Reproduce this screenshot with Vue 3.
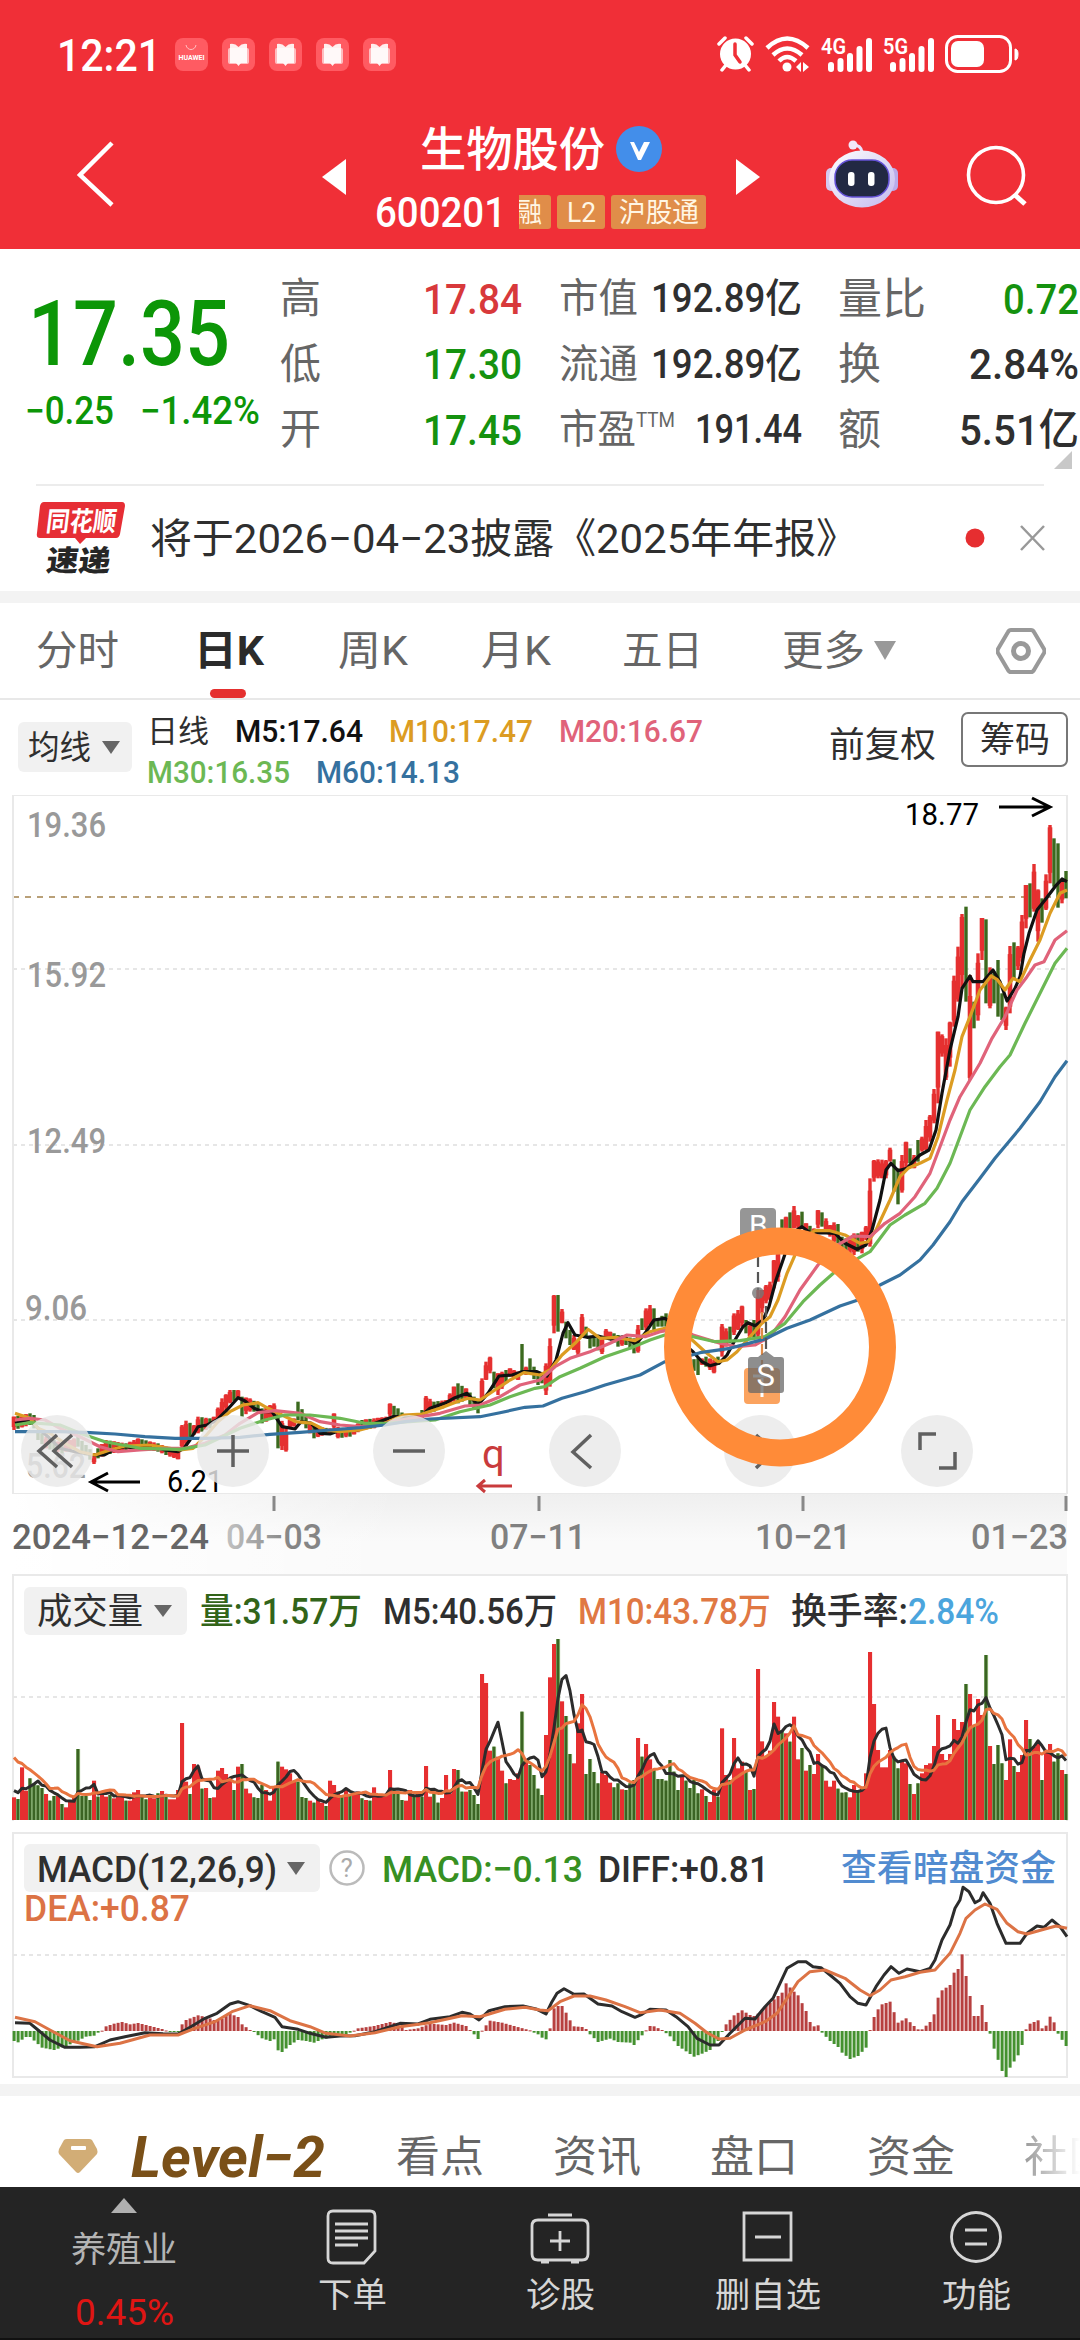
<script setup>
import { h } from 'vue'

// Text set to an exact width, so that columns line up whatever the font metrics are
const T = (props) =>
  h('svg', { width: props.w, height: props.s, class: 't', style: 'display:block;overflow:visible;flex:none' }, [
    h('text', {
      x: 0,
      y: props.s * 0.86,
      textLength: props.w,
      lengthAdjust: 'spacingAndGlyphs',
      'font-size': props.s,
      'font-weight': props.b || 400,
      'font-style': props.i ? 'italic' : 'normal',
      fill: props.c || 'currentColor'
    }, props.v)
  ])
T.props = ['v', 'w', 's', 'c', 'b', 'i']

const X = (i) => 14 + 4 * i
const N = 264

// r = rising day, g = falling day; number is the distance of the bar top from the panel top
const volRaw = `712r 717g 622r 692r 655g 672g 676g 684g 702r 722g 708g 708r 732g 742r 725r 712r 567g 708g 708g 720g 662r 710g 700r 710r 705g 715r 702r 708r 722g 722r 697r 690r 710g 718g 712r 715r 700g 693r 710g 718r 718r 690r 489r 665r 702g 612r 620r 686g 684r 714g 712r 632r 624r 642r 660r 690g 620r 612g 686r 700r 712g 714g 675g 690r 722r 680r 605g 620r 628r 640r 665r 665g 711g 714g 722r 728g 720r 728r 738g 662r 675r 695r 705g 690r 705g 700r 695r 715g 720r 722g 682r 705r 710r 705r 630r 690g 700g 720g 722r 690r 705g 700r 710g 618r 710r 700g 728g 714r 645r 700r 627r 630g 695g 695r 690g 705g 732g 342r 369r 572r 560g 590r 632r 670g 657r 660r 640r 455g 600r 615g 645g 686g
705g 525r 352r 252r 237g 424r 468g 582g 610r 490r 402r 642g 597g 636g 670g 636r 645r 668r 682g 670g 688r 690g 670g 660g 534r 590g 552r 598r 628g 657g 657g 662g 600g 635g 690g 650r 662g 684g 660g 700g 688r 708g 726r 690r 710g 505r 645r 660g 534r 625r 605r 635g 690r 687g 327r 544r 590r 572r 426r 470r 510g 520r 545g 470r 598r 564g 632r 615g 642r 582r 615g 662r 680r 662r 686g 698g 697g 712r 675r 690g 680r 640r 276r 432r 570r 622r 622r 570r 590g 625g 605r 610r 672g 702r 670g 640r 615r 610r 558r 465r 582r 600r 582r 477r 510r 486r 372g 402r 495g 417r 465r 285g 558r 612g 555g 610g 660r 538r 618g 636r 585r 480r 537g 560r 550r 660g 570r 552r 605g 580g 630r 642g`
const vols = volRaw.trim().split(/\s+/).map((s, i) => ({
  x: X(i), y: 1560 + parseInt(s) / 3, up: s.endsWith('r')
}))
const average = (n, seed) =>
  vols.map((v, i) => {
    let sum = 0
    for (let k = 0; k < n; k++) sum += i - k >= 0 ? vols[i - k].y : seed
    return `${v.x},${(sum / n).toFixed(1)}`
  }).join(' ')
const vol5 = average(5, 1789)
const vol10 = average(10, 1753)

const parse = (s) => s.trim().split(/\s+/).map((p) => p.split(',').map(Number))
const spread = (keys) => {
  const out = []
  let k = 0
  for (let i = 0; i < N; i++) {
    while (k < keys.length - 2 && keys[k + 1][0] <= i) k++
    const a = keys[k], b = keys[k + 1]
    const t = Math.min(1, Math.max(0, (i - a[0]) / (b[0] - a[0])))
    out.push(a.slice(1).map((v, j) => v + (b[j + 1] - v) * t))
  }
  return out
}

// day index, high, low
const range = parse(`0,950,990 4,940,975 5,945,985 6,990,1020 8,1010,1045 12,1030,1060 16,1010,1040 20,1060,1092 21,1045,1075 23,1020,1065 28,1030,1050 31,1015,1045 36,1030,1055 39,1045,1070 41,1045,1078 42,975,1050 43,962,1035 45,975,1005 46,950,1000 49,955,985 50,950,970 52,895,950 54,870,910 56,870,895 57,890,950 59,895,935 61,910,935 62,925,970 65,910,955 66,940,1045 68,985,1055 69,960,985 70,955,980 71,905,960 73,950,985 75,980,1015 79,985,1000 80,940,990 81,980,1015 84,990,1010 87,960,990 90,955,985 93,950,970 94,910,950 96,925,950 98,950,965 101,945,960 102,930,955 103,888,940 105,905,935 108,900,920 110,860,905 111,850,910 113,865,900 115,890,930 116,900,940 117,835,900 118,785,840 119,770,820 120,815,865 121,820,885 124,805,830 126,815,840 127,732,820 128,800,825 129,775,820 131,825,855 132,820,850 133,790,885 134,715,860 135,585,700 136,585,695 137,627,670 138,665,715 139,690,735 140,705,750 141,720,765 142,642,710 143,680,710 144,710,745 145,710,740 147,712,762 148,687,715 149,695,715 151,705,740 153,710,735 155,715,760 156,675,758 157,655,690 158,625,690 159,615,675 160,625,690 161,655,680 163,640,680 166,700,760 169,780,800 171,775,825 172,775,795 173,770,800 175,780,820 176,770,795 177,672,770 178,685,740 179,680,730 180,640,705 181,630,690 182,617,680 183,660,700 184,670,710 185,660,712 186,570,715 187,570,640 188,555,610 189,545,600 190,480,565 191,430,545 192,358,440 193,350,400 194,337,385 195,318,385 196,345,385 197,335,385 198,370,400 200,385,400 201,330,385 202,337,380 203,355,400 204,375,410 205,367,430 206,372,430 207,410,450 209,420,460 210,400,465 211,400,455 212,395,460 213,378,420 214,235,440 215,180,245 216,178,235 218,180,235 219,143,185 220,178,275 221,205,313 222,165,278 223,125,205 224,145,190 225,165,205 226,120,185 227,110,155 228,60,150 229,45,125 230,-33,70 231,-205,10 232,-197,-130 233,-185,-60 234,-235,-100 235,-373,-220 236,-460,-295 237,-558,-335 238,-580,-295 239,-375,-60 240,-295,-215 241,-440,-238 242,-546,-420 243,-542,-290 244,-398,-275 245,-385,-290 246,-420,-250 247,-320,-240 248,-280,-210 249,-462,-260 250,-473,-360 251,-462,-390 252,-555,-415 253,-645,-515 254,-650,-548 255,-708,-565 256,-632,-475 257,-605,-532 258,-677,-570 259,-825,-650 260,-785,-640 261,-770,-577 262,-660,-590 263,-687,-605`)
const candles = spread(range).map(([hi, lo], i) => {
  const j = ((i * 37) % 11) / 11
  const d = (lo - hi) * 0.22
  return {
    x: X(i), up: vols[i].up,
    y1: 1100 + hi / 3, y2: 1100 + lo / 3,
    b1: 1100 + (hi + d * j) / 3, b2: 1100 + (lo - d * (1 - j)) / 3
  }
})

const line = (s, top) => parse(s).map(([x, y]) => `${x},${(top + y / 3).toFixed(1)}`).join(' ')
const averages = [
  { c: '#111', p: line('15,970 30,958 38,985 48,1010 60,1045 75,1055 95,1065 104,1065 116,1045 125,1040 139,1045 150,1035 165,1050 178,1055 184,1045 190,1020 198,980 207,975 217,960 227,930 238,893 245,903 254,925 263,935 272,935 282,980 295,987 301,965 311,970 320,1000 330,1002 341,990 357,990 375,970 393,950 404,950 420,950 430,925 446,908 455,893 467,880 478,915 488,880 499,828 512,825 522,815 537,815 547,828 556,780 563,700 568,668 575,705 587,712 598,708 611,718 623,710 636,732 645,700 654,660 665,655 672,670 685,735 693,755 702,785 710,797 719,790 727,765 735,720 743,680 748,668 755,677 763,660 769,620 776,540 783,480 792,400 802,380 811,400 822,398 835,400 845,430 857,448 866,435 872,390 880,300 886,210 891,190 898,212 907,205 913,185 920,165 929,150 936,90 942,-20 950,-150 958,-250 962,-335 970,-372 973,-355 983,-355 993,-390 1000,-355 1007,-297 1015,-335 1020,-370 1024,-440 1029,-500 1037,-570 1045,-600 1055,-640 1062,-663 1067,-655', 1100) },
  { c: '#dc9c22', p: line('15,940 30,955 38,985 50,1000 65,1030 80,1055 95,1065 110,1050 125,1038 150,1035 170,1045 180,1050 193,1045 205,1010 218,965 230,935 243,915 258,908 268,925 282,945 296,965 312,970 325,990 340,995 360,990 385,970 404,945 422,942 440,925 457,905 468,895 480,900 495,870 510,840 524,818 540,825 550,810 562,765 575,730 588,688 600,715 616,712 635,722 650,695 665,685 680,690 693,722 705,755 718,785 727,780 737,755 750,710 762,670 770,650 778,600 787,520 795,465 805,410 815,392 830,392 845,405 860,430 868,425 876,390 890,300 900,230 908,205 921,188 930,175 938,110 947,0 955,-90 962,-190 970,-250 980,-330 991,-372 997,-362 1005,-330 1013,-365 1020,-355 1030,-420 1040,-480 1050,-560 1060,-620 1067,-630', 1100) },
  { c: '#e0637a', p: line('15,960 30,955 45,960 60,985 80,1010 100,1040 118,1055 140,1050 165,1045 185,1045 205,1030 225,1005 240,970 258,938 275,932 300,940 320,965 340,975 360,980 385,970 410,955 440,940 465,918 480,915 500,890 520,855 540,840 555,800 570,775 590,755 610,730 627,705 645,710 660,695 680,685 693,705 720,730 737,740 755,735 770,710 785,650 800,570 818,495 835,440 853,408 870,410 885,370 900,340 915,290 930,220 940,140 950,60 960,-10 970,-60 980,-110 992,-185 1005,-250 1017,-330 1027,-370 1035,-405 1044,-415 1055,-480 1067,-508', 1100) },
  { c: '#6cb854', p: line('15,975 30,968 60,975 80,1000 105,1025 140,1045 180,1048 205,1035 240,985 265,960 285,945 310,945 340,955 365,970 385,970 410,965 435,960 460,935 490,915 510,890 535,865 545,860 560,830 580,805 605,770 630,745 650,720 670,700 693,710 715,725 740,722 765,710 785,670 803,605 820,555 837,510 858,475 870,455 890,375 905,345 925,310 937,265 950,190 960,110 970,30 985,-40 1000,-100 1010,-135 1025,-230 1040,-320 1055,-410 1067,-455', 1100) },
  { c: '#35719f', p: line('15,995 60,995 90,998 115,1002 145,1010 175,1015 205,1015 240,1012 270,1003 300,997 330,990 360,983 385,975 405,965 430,957 480,950 500,938 525,922 543,918 562,895 585,875 605,855 640,825 665,785 680,775 700,758 730,745 765,717 787,685 810,660 840,618 858,600 880,555 900,525 920,480 933,435 950,365 962,305 980,235 995,175 1020,85 1040,5 1055,-70 1067,-118', 1100) }
]

const macd = spread(parse(`0,-30 1,-34 3,-18 4,-18 7,-50 10,-57 13,-45 15,-35 18,-17 20,-14 21,-5 22,1 23,14 25,22 27,27 29,20 31,24 33,18 35,12 37,6 39,-3 41,-2 42,20 43,33 46,47 48,42 50,33 51,30 54,52 56,42 57,20 59,3 60,-3 62,-22 64,-30 65,-25 66,-58 67,-63 69,-42 71,-27 73,-30 75,-35 77,-25 79,-20 82,-15 84,-5 85,1 86,8 90,15 94,27 96,22 98,3 101,8 104,22 108,18 110,25 113,15 114,3 115,-10 116,-24 117,1 118,17 119,31 122,25 125,15 129,2 130,-5 131,-10 132,-20 133,-25 134,8 135,68 136,75 137,75 138,55 139,32 140,14 142,12 143,6 144,-10 146,-33 149,-23 151,-33 154,-35 155,-42 157,-13 158,2 159,15 160,14 162,3 164,-16 166,-45 170,-77 172,-68 174,-57 176,-30 177,-3 178,20 180,47 182,62 184,48 185,45 186,52 188,75 190,95 192,115 193,143 195,118 196,107 198,60 199,27 200,14 201,17 202,-5 204,-30 206,-48 207,-65 209,-84 211,-75 213,-50 214,3 215,42 216,65 217,80 219,88 221,25 223,38 225,15 226,5 227,5 229,27 230,50 231,100 232,122 234,138 235,175 236,186 237,230 238,165 239,105 240,45 241,45 242,78 243,27 244,-8 245,-53 247,-120 248,-138 249,-110 251,-73 252,-42 253,5 254,22 256,32 257,8 258,16 259,43 260,26 261,-8 263,-45`))
  .map(([v], i) => ({ x: X(i), up: v > 0, y: v > 0 ? 2031 - v / 3 : 2031, h: Math.max(1, Math.abs(v) / 3) }))
const diff = line('15,608 30,610 38,630 50,660 65,682 80,682 95,680 110,660 125,650 145,638 163,641 178,642 190,622 205,595 217,580 230,552 238,545 250,557 262,575 275,592 282,620 298,628 310,640 326,652 340,648 355,647 375,635 400,610 418,612 430,598 450,590 462,577 470,582 479,600 489,572 505,560 523,558 537,568 546,582 552,545 557,520 564,506 574,523 584,522 598,552 612,558 622,575 635,592 642,583 650,568 666,570 676,590 688,620 697,655 710,675 719,675 730,640 745,595 755,597 765,560 773,535 780,490 787,445 798,425 806,425 813,440 821,443 830,465 840,490 850,530 858,550 866,555 876,500 884,465 891,440 899,460 907,447 920,455 930,445 935,420 942,360 950,315 955,265 960,240 963,202 969,215 975,248 980,240 983,218 990,250 997,310 1006,370 1013,370 1020,370 1027,340 1037,318 1044,322 1052,300 1060,320 1067,350', 1820)
const dea = line('15,592 35,605 50,630 70,662 97,680 120,670 150,645 178,645 195,625 215,605 232,575 250,557 270,572 290,602 310,620 326,640 350,648 375,638 400,620 430,608 462,587 480,590 505,568 525,562 540,570 548,572 560,545 574,528 590,528 606,540 625,560 640,578 660,570 680,580 695,610 707,638 719,657 730,655 745,630 765,605 777,580 787,535 798,485 810,455 825,450 845,475 860,510 870,527 880,510 891,480 905,470 920,457 935,450 950,400 960,340 966,295 975,270 985,252 997,268 1007,310 1018,335 1027,342 1044,328 1056,318 1067,325', 1820)

const scale = [
  ['19.36', 27, 837, 79], ['15.92', 27, 987, 79], ['12.49', 27, 1153, 79], ['9.06', 25, 1320, 62], ['5.62', 26, 1478, 60]
]
const buttons = [
  { x: 57, d: 'M0,-16 l-18,16 l18,16 M15,-16 l-18,16 l18,16' },
  { x: 233, d: 'M-16,0 h32 M0,-16 v32' },
  { x: 409, d: 'M-16,0 h32' },
  { x: 585, d: 'M6,-16 l-18,17 l18,16' },
  { x: 760, d: 'M-4,-16 l18,16 l-18,17' },
  { x: 937, d: 'M-17,-1 v-16 h16 M2,17 h16 v-16' }
]
const signal = [0, 1, 2, 3, 4]
</script>

<template>
  <main class="app">
    <header class="top">
      <div class="status">
        <T v="12:21" w="104" :s="45" b="500" class="clock" />
        <div class="notes">
          <svg v-for="n in 5" :key="n" width="33" height="33" viewBox="0 0 33 33">
            <rect width="33" height="33" rx="8" fill="#ff5b62" />
            <g v-if="n === 1">
              <path d="M11 7 C12 13 20 13 21 7" fill="none" stroke="#ffc0c2" />
              <text x="3.5" y="22" font-size="7" font-weight="700" textLength="26" fill="#fff">HUAWEI</text>
            </g>
            <g v-else fill="#fff">
              <rect x="6" y="10" width="21" height="16" rx="2" opacity=".6" />
              <path d="M8 6 Q13 5 16.500 9 Q20 5 25 6 V25 H19 L16.500 28 L14 25 H8 Z" opacity=".9" />
            </g>
          </svg>
        </div>
        <div class="system">
          <svg width="37" height="36" viewBox="0 0 37 36">
            <circle cx="18.500" cy="18" r="15.500" fill="#fff" />
            <path d="M2 8 L8 2 M29 2 L35 8 M5 34 L9 29 M32 34 L28 29" stroke="#fff" stroke-width="3.500" stroke-linecap="round" />
            <path d="M18 8 V19 L23 26" fill="none" stroke="#f02f37" stroke-width="3.500" stroke-linecap="round" />
          </svg>
          <svg class="wifi" width="46" height="36" viewBox="0 0 46 36" fill="none" stroke="#fff" stroke-width="4.500">
            <path d="M2 12 Q22 -7 43 12 M8 19 Q22 6 37 19 M14 25 Q22 17 31 25" />
            <circle cx="22" cy="31" r="4.500" fill="#fff" stroke="none" />
            <path d="M31 31 L36 26 V36 Z M38 26 V36 L44 31 Z" fill="#fff" stroke="none" />
          </svg>
          <svg v-for="g in ['4G', '5G']" :key="g" class="cell" width="52" height="37" viewBox="0 0 52 37">
            <text x="0" y="17.500" font-size="22" font-weight="600" textLength="25" lengthAdjust="spacingAndGlyphs" fill="#fff">{{ g }}</text>
            <rect v-for="k in signal" :key="k" :x="7 + k * 9.500" :y="[26, 22, 17, 10, 2][k]" width="6" :height="[10, 14, 19, 26, 34][k]" rx="3" fill="#fff" />
          </svg>
          <svg width="74" height="38" viewBox="0 0 74 38">
            <rect x="1.500" y="1.500" width="64" height="35" rx="11" fill="none" stroke="#fff" stroke-width="3" />
            <rect x="6" y="6" width="33" height="26" rx="7" fill="#fff" />
            <path d="M70 14 Q73 14 73 19 Q73 25 70 25 Z" fill="#fff" stroke="#fff" />
          </svg>
        </div>
      </div>
      <div class="title">
        <svg class="back" width="40" height="66" viewBox="0 0 40 66"><path d="M36 2 L4 34 L36 64" fill="none" stroke="#fff" stroke-width="4.500" /></svg>
        <svg class="prev" width="24" height="36"><path d="M24 0 V36 L0 18 Z" fill="#fff" /></svg>
        <div class="name">
          <div class="name-row">
            <T v="生物股份" w="185" :s="47" b="500" />
            <svg width="48" height="48" viewBox="0 0 48 48"><circle cx="24" cy="24" r="23" fill="#438eea" /><path d="M15 17 H19 L24 27 L29 17 H35 L26 35 H23 Z" fill="#fff" /></svg>
          </div>
          <div class="code-row">
            <T v="600201" w="131" :s="42" b="500" />
            <div class="tags">
              <span class="tag cut"><T v="融" w="26" :s="27" /></span>
              <span class="tag l2"><T v="L2" w="29" :s="28" /></span>
              <span class="tag hgt"><T v="沪股通" w="80" :s="27" /></span>
            </div>
          </div>
        </div>
        <svg class="next" width="24" height="36"><path d="M0 0 V36 L24 18 Z" fill="#fff" /></svg>
        <svg class="robot" width="74" height="68" viewBox="0 0 74 68">
          <defs><linearGradient id="bot" x1="0" y1="0" x2="1" y2="1"><stop offset="0" stop-color="#fff" /><stop offset="1" stop-color="#c3b9ee" /></linearGradient></defs>
          <path d="M37 12 Q36 5 28 5" fill="none" stroke="#e9e4ff" stroke-width="3" /><circle cx="28" cy="5" r="4.500" fill="#f2e9fb" />
          <rect x="1" y="28" width="10" height="23" rx="5" fill="#d5c9f1" /><rect x="63" y="28" width="10" height="23" rx="5" fill="#b9abea" />
          <ellipse cx="37" cy="39" rx="33" ry="28.500" fill="url(#bot)" />
          <rect x="10" y="20" width="54" height="37" rx="17" fill="#222943" stroke="#6552d8" stroke-width="1.500" />
          <rect x="23" y="32" width="6.500" height="14" rx="3" fill="#fff" /><rect x="43" y="32" width="6.500" height="14" rx="3" fill="#fff" />
        </svg>
        <svg class="search" width="62" height="62" viewBox="0 0 62 62" fill="none" stroke="#fff" stroke-width="3.600"><circle cx="30" cy="30" r="27.500" /><path d="M49 50 L59 59" stroke-width="5" /></svg>
      </div>
    </header>

    <section class="quote">
      <div class="price green">
        <T v="17.35" w="202" :s="91" b="500" />
        <div class="change"><T v="−0.25" w="89" :s="38" b="500" /><T v="−1.42%" w="120" :s="38" b="500" /></div>
      </div>
      <div class="col c1">
        <div><T v="高" w="41" :s="42" class="lab" /><T v="17.84" w="99" :s="43" b="500" c="#d8393b" /></div>
        <div><T v="低" w="41" :s="42" class="lab" /><T v="17.30" w="99" :s="43" b="500" c="#15920f" /></div>
        <div><T v="开" w="41" :s="42" class="lab" /><T v="17.45" w="99" :s="43" b="500" c="#15920f" /></div>
      </div>
      <div class="col c2">
        <div><T v="市值" w="79" :s="40" class="lab" /><T v="192.89亿" w="151" :s="40" b="500" /></div>
        <div><T v="流通" w="79" :s="40" class="lab" /><T v="192.89亿" w="151" :s="40" b="500" /></div>
        <div><span class="ttm lab"><T v="市盈" w="77" :s="40" /><T v="TTM" w="39" :s="21" /></span><T v="191.44" w="107" :s="40" b="500" /></div>
      </div>
      <div class="col c3">
        <div><T v="量比" w="88" :s="43" class="lab" /><T v="0.72" w="76" :s="43" b="500" c="#15920f" /></div>
        <div><T v="换" w="43" :s="43" class="lab" /><T v="2.84%" w="110" :s="43" b="500" /></div>
        <div><T v="额" w="43" :s="43" class="lab" /><T v="5.51亿" w="120" :s="43" b="500" /></div>
      </div>
      <svg class="corner" width="18" height="18"><path d="M18 0 V18 H0 Z" fill="#c8c8c8" /></svg>
    </section>

    <section class="notice">
      <svg width="92" height="76" viewBox="0 0 92 76">
        <path d="M8 1 H86 Q89 1 89 5 L84 33 Q83 37 80 37 H50 L44 43 L39 37 H4 Q0 37 1 32 L4 5 Q5 1 8 1 Z" fill="#e62e35" />
        <text x="10" y="30" transform="skewX(-7) translate(3 0)" font-size="27" font-weight="700" textLength="70" lengthAdjust="spacingAndGlyphs" fill="#fff">同花顺</text>
        <text x="10" y="70" transform="skewX(-7) translate(8 0)" font-size="29" font-weight="900" textLength="64" lengthAdjust="spacingAndGlyphs" fill="#262626">速递</text>
      </svg>
      <T v="将于2026−04−23披露《2025年年报》" w="708" :s="41" class="news" />
      <svg class="dismiss" width="80" height="26" viewBox="0 0 80 26"><circle cx="10" cy="13" r="9.500" fill="#e62e30" /><path d="M56 1 L79 25 M79 1 L56 25" stroke="#999" stroke-width="2.500" /></svg>
    </section>

    <nav class="periods">
      <span class="p1"><T v="分时" w="83" :s="41" /></span>
      <span class="p2"><T v="日K" w="70" :s="41" b="700" c="#2b2b2b" /><i></i></span>
      <span class="p3"><T v="周K" w="70" :s="41" /></span>
      <span class="p4"><T v="月K" w="70" :s="41" /></span>
      <span class="p5"><T v="五日" w="81" :s="41" /></span>
      <span class="p6"><T v="更多" w="83" :s="41" /><svg width="24" height="19"><path d="M1 0 H23 L12 19 Z" fill="#999" /></svg></span>
      <svg class="hex" width="50" height="46" viewBox="0 0 50 46" fill="none" stroke="#999" stroke-width="4"><path d="M15 2 H35 Q37 2 38 4 L48 21 Q49 23 48 25 L38 42 Q37 44 35 44 H15 Q13 44 12 42 L2 25 Q1 23 2 21 L12 4 Q13 2 15 2 Z" /><circle cx="25" cy="23" r="7.500" stroke-width="5" /></svg>
    </nav>

    <section class="ma">
      <div class="pick"><T v="均线" w="63" :s="33" /><svg width="18" height="13"><path d="M0 0 H18 L9 13 Z" fill="#666" /></svg></div>
      <div class="legend">
        <div><T v="日线" w="62" :s="31" /><T v="M5:17.64" w="128" :s="32" b="500" c="#111" /><T v="M10:17.47" w="144" :s="32" b="500" c="#dc9c22" /><T v="M20:16.67" w="144" :s="32" b="500" c="#e0637a" /></div>
        <div><T v="M30:16.35" w="143" :s="32" b="500" c="#6cb854" /><T v="M60:14.13" w="144" :s="32" b="500" c="#35719f" /></div>
      </div>
      <T v="前复权" w="107" :s="35" class="adjust" />
      <div class="chips"><T v="筹码" w="70" :s="35" /></div>
    </section>

    <section class="kline">
      <svg width="1080" height="699" viewBox="0 795 1080 699">
        <g fill="none">
          <path d="M13 969 H1067 M13 1145 H1067 M13 1320 H1067" stroke="#dedede" stroke-width="1.500" stroke-dasharray="4 4" />
          <path d="M13 897 H1067" stroke="#b9a078" stroke-width="2" stroke-dasharray="6 6" />
          <rect x="13" y="795" width="1054" height="699" stroke="#e9e9e9" stroke-width="2" />
        </g>
        <g fill="#999" font-size="35" font-weight="500">
          <text v-for="s in scale" :key="s[0]" :x="s[1]" :y="s[2]" :textLength="s[3]" lengthAdjust="spacingAndGlyphs">{{ s[0] }}</text>
        </g>
        <g v-for="(c, i) in candles" :key="i" :fill="c.up ? '#e53030' : '#3b6a1e'">
          <rect :x="c.x - 1.700" :y="c.y1" width="3.400" :height="c.y2 - c.y1" />
          <rect v-if="c.up" :x="c.x - 2.300" :y="c.b1" width="4.600" :height="c.b2 - c.b1" />
        </g>
        <polyline v-for="a in averages" :key="a.c" :points="a.p" fill="none" :stroke="a.c" stroke-width="3.200" stroke-linejoin="round" />
        <g fill="none" stroke="#000" stroke-width="3">
          <path d="M999 807 H1049 M1032 798 L1050 807 L1032 816" />
          <path d="M140 1482 H92 M108 1473 L91 1482 L108 1491" />
          <path d="M512 1486 H479 M485 1480 L478 1486 L485 1492" stroke="#c93b3c" />
        </g>
        <text x="905" y="825" font-size="31" textLength="74" lengthAdjust="spacingAndGlyphs">18.77</text>
        <text x="167" y="1492" font-size="31" textLength="56" lengthAdjust="spacingAndGlyphs">6.21</text>
        <text x="482" y="1468" font-size="40" fill="#c93b3c">q</text>

        <path d="M758 1240 V1290" stroke="#555" stroke-width="2.200" stroke-dasharray="11 5" />
        <circle cx="758" cy="1293" r="6" fill="#777" opacity=".8" />
        <rect x="740" y="1208" width="36" height="36" rx="4" fill="#969696" />
        <text x="749" y="1236" font-size="30" fill="#fff">B</text>
        <path d="M762 1312 V1368" stroke="#e08a45" stroke-width="2.200" stroke-dasharray="11 5" />
        <path d="M766 1306 V1352" stroke="#555" stroke-width="2.200" stroke-dasharray="11 5" />
        <rect x="744" y="1368" width="36" height="36" rx="4" fill="#fba35f" />
        <path d="M762 1378 V1397 M753 1376 H771" stroke="#fff" stroke-width="3" />
        <path d="M758 1357 L766 1351 L774 1357 H781 Q784 1357 784 1360 V1390 Q784 1393 781 1393 H751 Q748 1393 748 1390 V1360 Q748 1357 751 1357 Z" fill="#666" opacity=".74" />
        <text x="756.500" y="1386" font-size="31" fill="#fff">S</text>

        <g v-for="b in buttons" :key="b.x" :transform="`translate(${b.x} 1451)`">
          <circle r="36" fill="#e9e9e9" opacity=".82" />
          <path :d="b.d" fill="none" stroke="#606060" stroke-width="3.500" />
        </g>
        <ellipse cx="780" cy="1347" rx="102.500" ry="106" fill="none" stroke="#ff8b38" stroke-width="27" />
      </svg>
    </section>

    <section class="dates">
      <svg width="1080" height="80" viewBox="0 1494 1080 80">
        <defs>
          <linearGradient id="fade" gradientUnits="userSpaceOnUse" x1="215" y1="0" x2="290" y2="0"><stop offset="0" stop-color="#ccc" /><stop offset="1" stop-color="#858585" /></linearGradient>
        </defs>
        <path d="M274 1496 V1511 M539 1496 V1511 M803 1496 V1511 M1066 1496 V1511" stroke="#888" stroke-width="3" />
        <g font-size="35" font-weight="500" fill="#808080">
          <text x="12" y="1549" textLength="197" lengthAdjust="spacingAndGlyphs" fill="#666">2024−12−24</text>
          <text x="226" y="1549" textLength="96" lengthAdjust="spacingAndGlyphs" fill="url(#fade)">04−03</text>
          <text x="490" y="1549" textLength="96" lengthAdjust="spacingAndGlyphs">07−11</text>
          <text x="755" y="1549" textLength="96" lengthAdjust="spacingAndGlyphs">10−21</text>
          <text x="971" y="1549" textLength="97" lengthAdjust="spacingAndGlyphs">01−23</text>
        </g>
      </svg>
    </section>

    <section class="panel volume">
      <svg class="plot" width="1080" height="248" viewBox="0 1574 1080 248">
        <path d="M13 1821 V1575 H1067 V1821" fill="none" stroke="#e9e9e9" stroke-width="2" />
        <path d="M13 1701 H1067" stroke="#e6e6e6" stroke-width="2" stroke-dasharray="4 4" transform="translate(0 -4)" />
        <template v-for="(v, i) in vols" :key="i">
          <rect :x="v.x - 2" :y="v.y" width="4.100" :height="1820 - v.y" :fill="v.up ? '#e62f30' : '#90b77a'" />
          <rect v-if="!v.up" :x="v.x - 1.400" :y="v.y" width="2.600" :height="1820 - v.y" fill="#3b6423" />
        </template>
        <polyline :points="vol5" fill="none" stroke="#2c2c2c" stroke-width="3" stroke-linejoin="round" />
        <polyline :points="vol10" fill="none" stroke="#e8743f" stroke-width="3" stroke-linejoin="round" />
      </svg>
      <div class="bar">
        <div class="pick"><T v="成交量" w="106" :s="36" /><svg width="18" height="12"><path d="M0 0 H18 L9 12 Z" fill="#666" /></svg></div>
        <T v="量:31.57万" w="162" :s="36" b="500" c="#326419" class="v1" />
        <T v="M5:40.56万" w="174" :s="36" b="500" class="v2" />
        <T v="M10:43.78万" w="193" :s="36" b="500" c="#e07843" class="v3" />
        <T v="换手率:" w="117" :s="36" b="500" class="v4" />
        <T v="2.84%" w="91" :s="36" b="500" c="#4ba5dd" />
      </div>
    </section>

    <section class="panel macd">
      <svg class="plot" width="1080" height="247" viewBox="0 1832 1080 247">
        <rect x="13" y="1833" width="1054" height="244" fill="none" stroke="#e9e9e9" stroke-width="2" />
        <path d="M13 1955 H1067" stroke="#e6e6e6" stroke-width="2" stroke-dasharray="4 4" />
        <rect v-for="(m, i) in macd" :key="i" :x="m.x - 1.400" :y="m.y" width="3" :height="m.h" :fill="m.up ? '#b7403f' : '#44912f'" />
        <polyline :points="diff" fill="none" stroke="#2c2c2c" stroke-width="3" stroke-linejoin="round" />
        <polyline :points="dea" fill="none" stroke="#dc7345" stroke-width="3" stroke-linejoin="round" />
      </svg>
      <div class="bar">
        <div class="pick wide"><T v="MACD(12,26,9)" w="240" :s="37" b="500" /><svg width="18" height="13"><path d="M0 0 H18 L9 13 Z" fill="#666" /></svg></div>
        <svg class="help" width="36" height="36" viewBox="0 0 36 36"><circle cx="18" cy="18" r="16.500" fill="none" stroke="#bbb" stroke-width="2.500" /><text x="11.500" y="27" font-size="26" fill="#aaa">?</text></svg>
        <T v="MACD:−0.13" w="201" :s="37" b="500" c="#379022" class="m1" />
        <T v="DIFF:+0.81" w="171" :s="37" b="500" class="m2" />
        <T v="查看暗盘资金" w="215" :s="36" c="#518bd0" b="500" class="m3" />
      </div>
      <T v="DEA:+0.87" w="166" :s="36" b="500" c="#dc7345" class="dea" />
    </section>

    <nav class="sections">
      <svg width="40" height="36" viewBox="0 0 40 36"><path d="M9 1 H31 Q33 1 34 2 L39 11 Q40 14 39 16 L22 34 Q20 36 18 34 L1 16 Q0 14 1 11 L6 2 Q7 1 9 1 Z" fill="#d2ad76" /><rect x="13" y="8" width="15" height="4" rx="1" fill="#fff" /></svg>
      <T v="Level−2" w="194" :s="57" b="700" i="1" c="#7a5018" class="level" />
      <T v="看点" w="88" :s="43" /><T v="资讯" w="88" :s="43" /><T v="盘口" w="88" :s="43" /><T v="资金" w="88" :s="43" />
      <span class="more"><T v="社区" w="88" :s="43" /></span>
    </nav>

    <footer class="dock">
      <div class="sector">
        <svg width="26" height="15"><path d="M13 0 L26 15 H0 Z" fill="#b0b0b0" /></svg>
        <T v="养殖业" w="106" :s="35" c="#b4b4b4" />
        <T v="0.45%" w="99" :s="37" c="#e01513" class="pct" />
      </div>
      <div class="item">
        <svg width="60" height="56" viewBox="0 0 60 56"><path d="M11 2 H48 Q53 2 53 7 V42 L42 54 H11 Q6 54 6 49 V7 Q6 2 11 2 Z M13 15 H46 M13 22 H46 M13 29 H46 M13 36 H36" /></svg>
        <T v="下单" w="69" :s="34" />
      </div>
      <div class="item">
        <svg width="60" height="56" viewBox="0 0 60 56"><path d="M8 11 H52 Q58 11 58 17 V45 Q58 51 52 51 H8 Q2 51 2 45 V17 Q2 11 8 11 Z M18 6 H42 M30 22 V42 M20 32 H40 M11 53 H19 M41 53 H49" /></svg>
        <T v="诊股" w="69" :s="34" />
      </div>
      <div class="item">
        <svg width="60" height="56" viewBox="0 0 60 56"><path d="M6 4 H53 V51 H6 Z M17 28 H43" /></svg>
        <T v="删自选" w="106" :s="34" />
      </div>
      <div class="item">
        <svg width="60" height="56" viewBox="0 0 60 56"><circle cx="30" cy="28" r="24.500" /><path d="M19 21 H41 M19 35 H41" /></svg>
        <T v="功能" w="69" :s="34" />
      </div>
    </footer>
  </main>
</template>

<style>
body { margin: 0; background: #fff; }
</style>

<style scoped>
.app { width: 1080px; height: 2340px; overflow: hidden; display: flex; flex-direction: column; background: #fff; color: #2f2f2f; font-family: Roboto, "Noto Sans CJK SC", sans-serif; }
.app > * { flex: none; box-sizing: border-box; }
svg { display: block; flex: none; }

.top { height: 249px; background: #f02f37; color: #fff; }
.status { height: 108px; display: flex; align-items: center; padding-left: 57px; }
.notes { display: flex; gap: 14px; margin-left: 14px; }
.system { display: flex; align-items: center; margin-left: 321px; }
.wifi { margin: 0 10px 0 11px; }
.cell { margin-right: 10px; overflow: visible; }
.title { height: 141px; display: flex; align-items: flex-start; }
.back { margin: 33px 0 0 76px; }
.prev { margin: 51px 0 0 206px; }
.name { width: 390px; padding: 17px 0 0 29px; box-sizing: border-box; }
.name-row { display: flex; align-items: center; gap: 10px; margin-left: 45px; }
.code-row { display: flex; align-items: center; margin-top: 17px; height: 44px; gap: 13px; }
.tags { display: flex; gap: 6px; }
.tag { height: 34px; background: #e08d49; border-radius: 3px; display: flex; align-items: center; justify-content: center; color: #fff6e4; }
.cut { width: 32px; justify-content: flex-start; border-radius: 0 3px 3px 0; overflow: hidden; }
.cut > * { margin-left: -3px; }
.l2 { width: 48px; }
.hgt { width: 95px; }
.next { margin: 51px 0 0 0; }
.robot { margin: 32px 0 0 65px; }
.search { margin: 37px 0 0 67px; }

.quote { height: 235px; position: relative; display: flex; }
.price { width: 281px; padding: 38px 0 0 28px; box-sizing: border-box; }
.green { color: #0c9607; }
.change { display: flex; gap: 26px; margin: 13px 0 0 -3px; }
.col { padding-top: 17px; display: flex; flex-direction: column; gap: 1px; }
.col > div { height: 64.500px; display: flex; align-items: center; justify-content: space-between; }
.lab { color: #666; }
.c1 { width: 242px; margin-left: -1px; }
.c2 { width: 243px; margin-left: 37px; }
.c3 { width: 241px; margin-left: 36px; }
.ttm { display: flex; }
.corner { position: absolute; right: 8px; bottom: 15px; }

.notice { height: 107px; margin: 0 36px; border-top: 2px solid #ececec; display: flex; align-items: center; }
.news { margin-left: 22px; }
.dismiss { margin: -2px -1px 0 auto; }

.periods { height: 109px; border-top: 12px solid #f3f3f3; border-bottom: 2px solid #e8e8e8; display: flex; align-items: center; padding-left: 36px; color: #666; }
.periods span { position: relative; display: flex; align-items: center; height: 95px; }
.p2 { margin-left: 75px; }
.p2 i { position: absolute; left: 16px; bottom: 0; width: 36px; height: 9px; border-radius: 5px; background: #e5302f; }
.p3 { margin-left: 74px; }
.p4 { margin-left: 73px; }
.p5 { margin-left: 71px; }
.p6 { margin-left: 79px; gap: 8px; }
.hex { margin-left: 99px; }

.ma { height: 95px; display: flex; align-items: flex-start; padding-left: 18px; }
.pick { height: 48px; background: #f1f1f1; border-radius: 6px; display: flex; align-items: center; gap: 11px; padding: 0 15px 0 13px; }
.ma .pick { height: 50px; margin-top: 22px; padding: 0 12px 0 10px; }
.legend { width: 680px; padding: 14px 0 0 15px; box-sizing: border-box; display: flex; flex-direction: column; gap: 9px; }
.legend > div { display: flex; align-items: center; gap: 26px; height: 32px; }
.adjust { margin: 27px 25px 0 17px; }
.chips { margin-top: 12px; width: 107px; height: 55px; box-sizing: border-box; border: 2px solid #777; border-radius: 7px; display: flex; align-items: center; justify-content: center; }

.kline { height: 699px; }
.dates { height: 80px; background: linear-gradient(90deg, #fff 13px, #fff0 400px, #fff0 1067px, #fff 1067px), linear-gradient(#efefef, #fafafa 60%); }
.panel { position: relative; }
.plot { position: absolute; left: 0; top: 0; }
.volume { height: 258px; padding: 13px 0 0 24px; }
.bar { position: relative; display: flex; align-items: center; height: 48px; }
.v1 { margin: 0 21px 0 13px; }
.v2 { margin-right: 21px; }
.v3 { margin-right: 20px; }
.macd { height: 252px; padding: 12px 0 0 24px; }
.wide { gap: 10px; }
.help { margin: 0 17px 0 9px; }
.m1 { margin-right: 15px; }
.m3 { margin-left: 72px; }
.dea { position: relative; margin: -2px 0 0 0; }

.sections { height: 103px; border-top: 12px solid #f3f3f3; display: flex; align-items: center; padding: 29px 0 0 58px; gap: 69px; color: #666; overflow: hidden; }
.level { margin: 0 2px 0 -36px; }
.more { width: 57px; overflow: hidden; -webkit-mask-image: linear-gradient(90deg, #000a, #0000); mask-image: linear-gradient(90deg, #000a, #0000); }

.dock { height: 153px; background: #242424; border-bottom: 2px solid #111; color: #d6d6d6; display: flex; }
.sector { width: 248px; padding-top: 11px; box-sizing: border-box; display: flex; flex-direction: column; align-items: center; }
.sector > :nth-child(2) { margin-top: 19px; }
.pct { margin-top: 26px; }
.item { width: 208px; padding-top: 22px; display: flex; flex-direction: column; align-items: center; gap: 13px; }
.item svg { fill: none; stroke: #d6d6d6; stroke-width: 2.800; }
.item .t { stroke: none; }
</style>
